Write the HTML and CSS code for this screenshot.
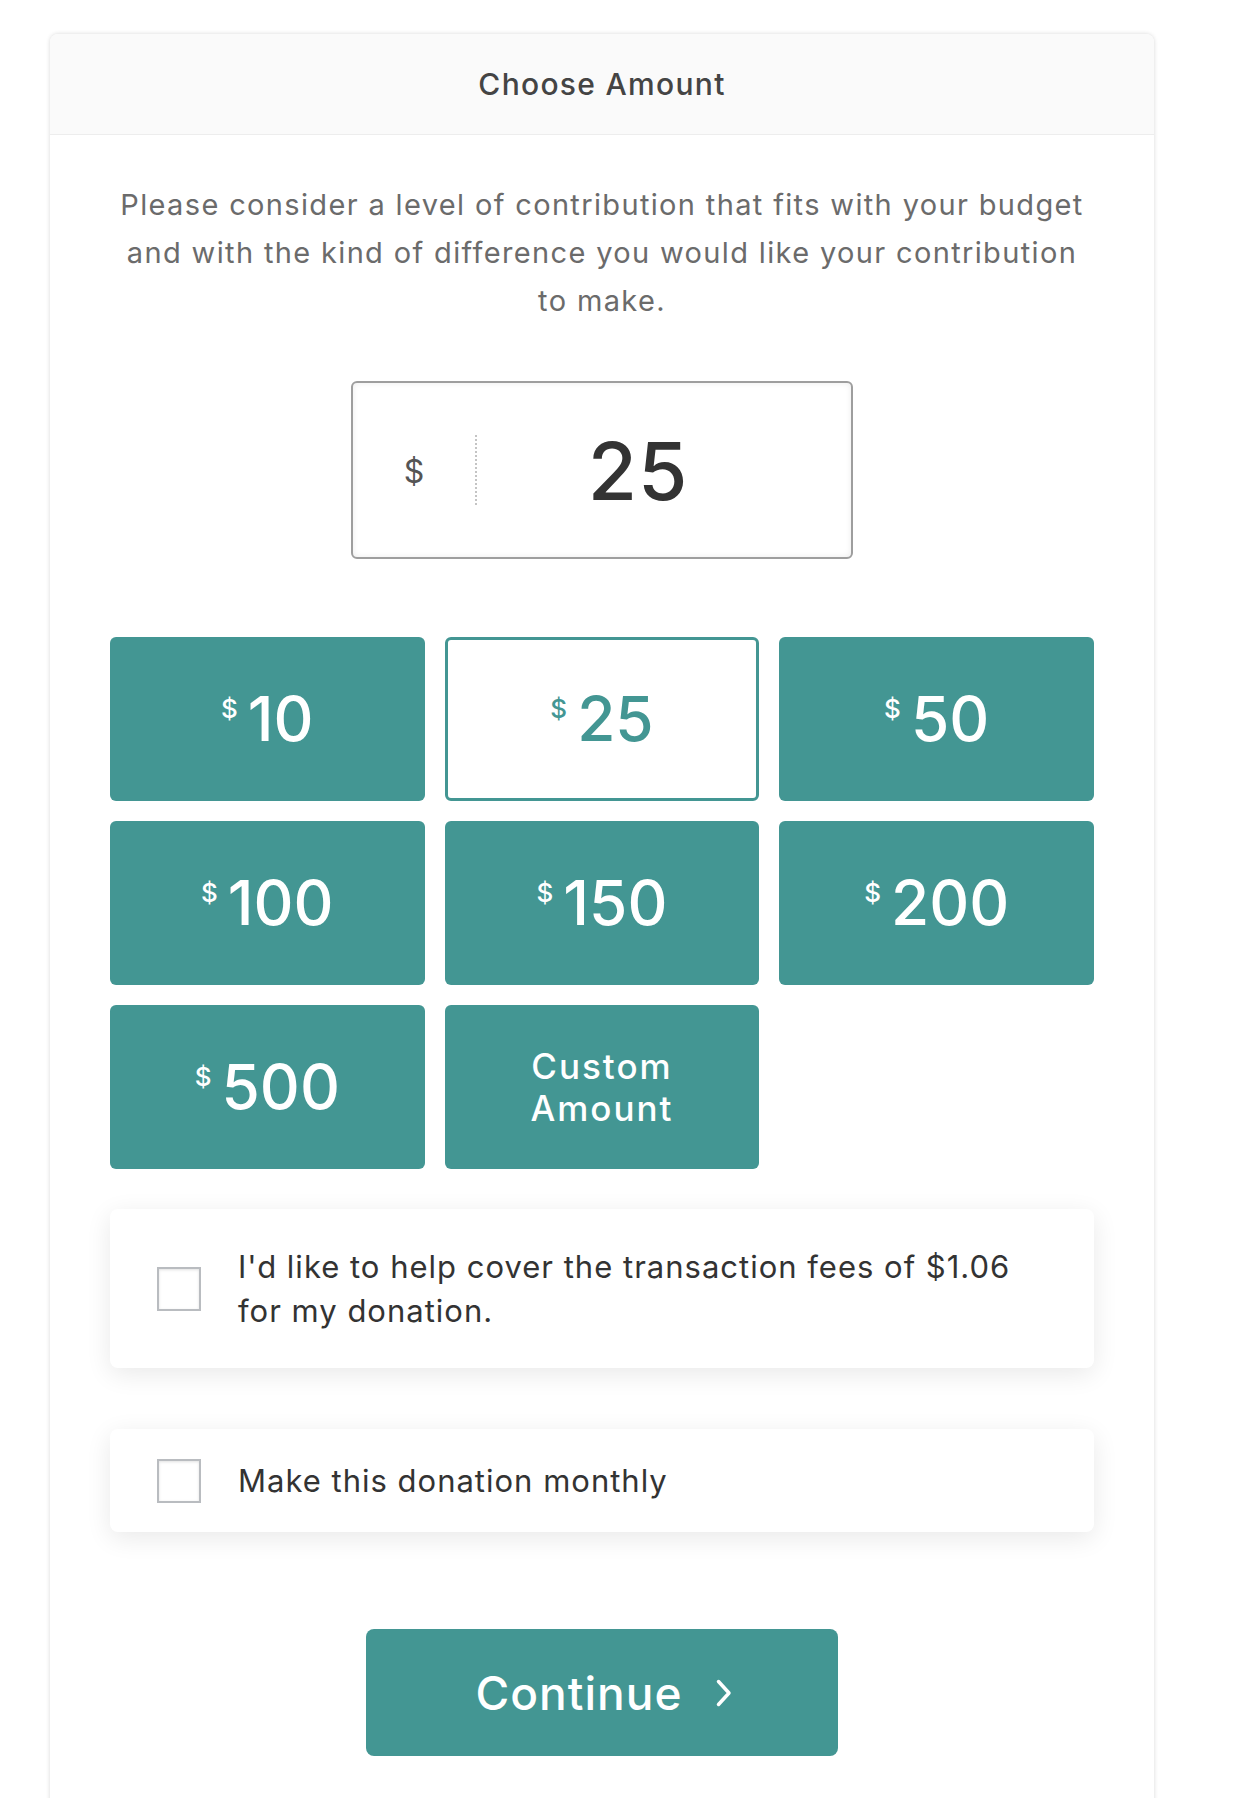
FILE: index.html
```html
<!DOCTYPE html>
<html lang="en">
<head>
<meta charset="utf-8">
<title>Choose Amount</title>
<link rel="stylesheet" href="styles.css">
</head>
<body>
<div class="card">
  <div class="card-header">Choose Amount</div>
  <div class="card-body">
    <p class="intro">Please consider a level of contribution that fits with your budget and with the kind of difference you would like your contribution to make.</p>

    <div class="amount-input">
      <span class="currency">$</span>
      <span class="divider"></span>
      <span class="value">25</span>
    </div>

    <div class="amounts">
      <button class="amount"><sup class="cur">$</sup><span class="num">10</span></button>
      <button class="amount amount--selected"><sup class="cur">$</sup><span class="num">25</span></button>
      <button class="amount"><sup class="cur">$</sup><span class="num">50</span></button>
      <button class="amount"><sup class="cur">$</sup><span class="num">100</span></button>
      <button class="amount"><sup class="cur">$</sup><span class="num">150</span></button>
      <button class="amount"><sup class="cur">$</sup><span class="num">200</span></button>
      <button class="amount"><sup class="cur">$</sup><span class="num">500</span></button>
      <button class="amount amount--custom">Custom<br>Amount</button>
    </div>

    <label class="option option--fees">
      <span class="check"></span>
      <span class="option-text">I'd like to help cover the transaction fees of $1.06 for my donation.</span>
    </label>

    <label class="option option--monthly">
      <span class="check"></span>
      <span class="option-text">Make this donation monthly</span>
    </label>

    <button class="continue">Continue
      <svg class="chev" width="16" height="28" viewBox="0 0 16 28"><path d="M2.5 2.5 L13 14 L2.5 25.5" fill="none" stroke="#fff" stroke-width="3.5" stroke-linecap="round" stroke-linejoin="round"/></svg>
    </button>
  </div>
</div>
</body>
</html>
```

FILE: styles.css
```css
* { box-sizing: border-box; }
html, body { margin: 0; padding: 0; background: #fff; }
body {
  font-family: Inter, "Open Sans", sans-serif;
  height: 1798px;
  overflow: hidden;
}
.card {
  margin: 34px 0 0 50px;
  width: 1104px;
  min-height: 1800px;
  border-radius: 8px 8px 0 0;
  background: #fff;
  box-shadow: 0 0 4px rgba(0,0,0,0.16);
  overflow: hidden;
}
.card-header {
  height: 101px;
  background: #fafafa;
  border-bottom: 1px solid #ededed;
  text-align: center;
  font-size: 30px;
  font-weight: 500;
  letter-spacing: 1.3px;
  line-height: 100px;
  color: #444;
}
.card-body {
  padding: 46px 60px 0;
}
.intro {
  margin: 0 auto;
  max-width: 975px;
  text-align: center;
  font-size: 29px;
  line-height: 48px;
  letter-spacing: 1.35px;
  color: #6b6b6b;
}
.amount-input {
  margin: 56px auto 0;
  width: 502px;
  height: 178px;
  border: 2px solid #9e9e9e;
  border-radius: 6px;
  box-shadow: inset 0 0 6px rgba(0,0,0,0.08);
  display: flex;
  align-items: center;
}
.currency {
  width: 122px;
  text-align: center;
  font-size: 32px;
  color: #555;
  padding-top: 2px;
}
.divider {
  width: 0;
  height: 70px;
  border-left: 2px dotted #c4c4c4;
}
.value {
  flex: 1;
  text-align: center;
  padding-right: 52px;
  font-size: 80px;
  font-weight: 500;
  letter-spacing: 1px;
  color: #333;
}
.amounts {
  margin-top: 78px;
  display: grid;
  grid-template-columns: repeat(3, 1fr);
  grid-auto-rows: 164px;
  gap: 20px;
}
.amount {
  border: 0;
  border-radius: 6px;
  background: #439693;
  color: #fff;
  font-family: inherit;
  display: flex;
  align-items: center;
  justify-content: center;
  cursor: pointer;
  padding: 0;
}
.cur {
  font-size: 26px;
  font-weight: 500;
  align-self: center;
  margin-top: -22px;
  margin-right: 10px;
}
.num {
  font-size: 62px;
  font-weight: 500;
  line-height: 1;
}
.amount--selected {
  background: #fff;
  border: 3px solid #439693;
  color: #439693;
}
.amount--custom {
  font-size: 35px;
  font-weight: 500;
  line-height: 42px;
  letter-spacing: 2px;
  text-align: center;
}
.option {
  margin-top: 40px;
  display: flex;
  align-items: center;
  gap: 37px;
  padding: 0 80px 0 47px;
  background: #fff;
  border-radius: 8px;
  box-shadow: 0 6px 26px rgba(0,0,0,0.09);
}
.option--fees { height: 159px; }
.option--monthly { height: 103px; margin-top: 61px; }
.check {
  flex: 0 0 44px;
  width: 44px;
  height: 44px;
  border: 2px solid #b9bcc0;
  background: #fff;
  box-shadow: inset 0 1px 3px rgba(0,0,0,0.12);
}
.option-text {
  font-size: 31px;
  line-height: 44px;
  letter-spacing: 1px;
  color: #333;
}
.continue {
  display: flex;
  align-items: center;
  justify-content: center;
  gap: 34px;
  margin: 97px auto 0;
  width: 472px;
  height: 127px;
  border: 0;
  border-radius: 8px;
  background: #439693;
  color: #fff;
  font-family: inherit;
  font-size: 46px;
  font-weight: 500;
  letter-spacing: 1px;
  padding: 0 0 0 4px;
}
.chev { display: block; }
```
